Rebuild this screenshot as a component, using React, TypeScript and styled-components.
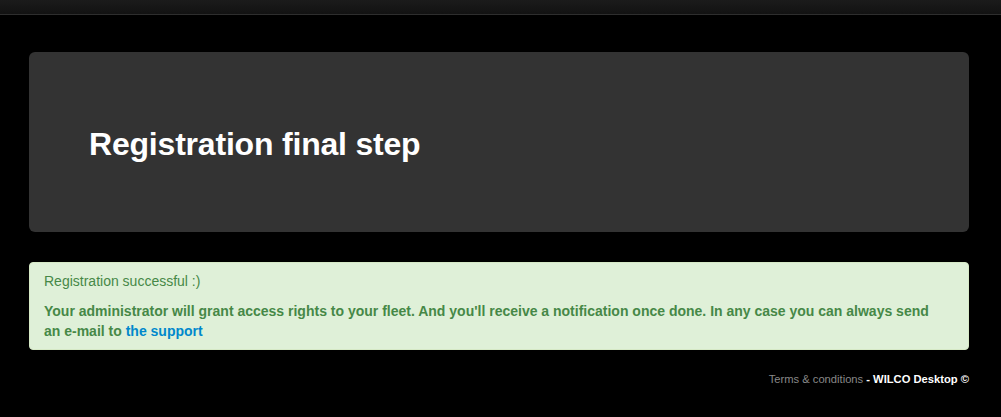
import React from "react";
import styled, { createGlobalStyle } from "styled-components";

const Global = createGlobalStyle`
  html, body { margin: 0; padding: 0; background: #000; }
  body { font-family: "Liberation Sans", Arial, Helvetica, sans-serif; font-size: 14px; line-height: 20px; color: #fff; }
`;

const NavBar = styled.div`
  height: 14px;
  background: linear-gradient(#1b1b1b, #121212);
  border-bottom: 1px solid #2e2e2e;
`;

const Container = styled.div`
  width: 940px;
  margin: 0 0 0 29px;
  padding: 37px 0 0;
`;

const Hero = styled.div`
  background: #333333;
  border-radius: 6px;
  padding: 60px;
`;

const Title = styled.h1`
  margin: 0;
  font-size: 32px;
  line-height: 60px;
  font-weight: bold;
  color: #fff;
  letter-spacing: -0.2px;
  position: relative;
  top: 2px;
`;

const Alert = styled.div`
  margin-top: 30px;
  background: #dff0d8;
  border: 1px solid #d6e9c6;
  border-radius: 4px;
  padding: 8px 35px 8px 14px;
  color: #468847;
`;

const AlertHead = styled.div`
  font-weight: normal;
  margin-bottom: 10px;
`;

const AlertText = styled.p`
  margin: 0;
  font-weight: bold;
`;

const SupportLink = styled.a`
  color: #0088cc;
  text-decoration: none;
`;

const Footer = styled.div`
  display: flex;
  justify-content: flex-end;
  margin-top: 21px;
  font-size: 11.2px;
  line-height: 16px;
`;

const FooterLink = styled.a`
  color: #888;
  text-decoration: none;
`;

const Brand = styled.span`
  color: #fff;
  font-weight: bold;
  white-space: pre;
`;

export default function App() {
  return (
    <>
      <Global />
      <NavBar />
      <Container>
        <Hero>
          <Title>Registration final step</Title>
        </Hero>
        <Alert>
          <AlertHead>Registration successful :)</AlertHead>
          <AlertText>
            Your administrator will grant access rights to your fleet. And you'll receive a notification once done. In any case you can always send an e-mail to{" "}
            <SupportLink href="#">the support</SupportLink>
          </AlertText>
        </Alert>
        <Footer>
          <FooterLink href="#">Terms &amp; conditions</FooterLink>
          <Brand> - WILCO Desktop ©</Brand>
        </Footer>
      </Container>
    </>
  );
}
